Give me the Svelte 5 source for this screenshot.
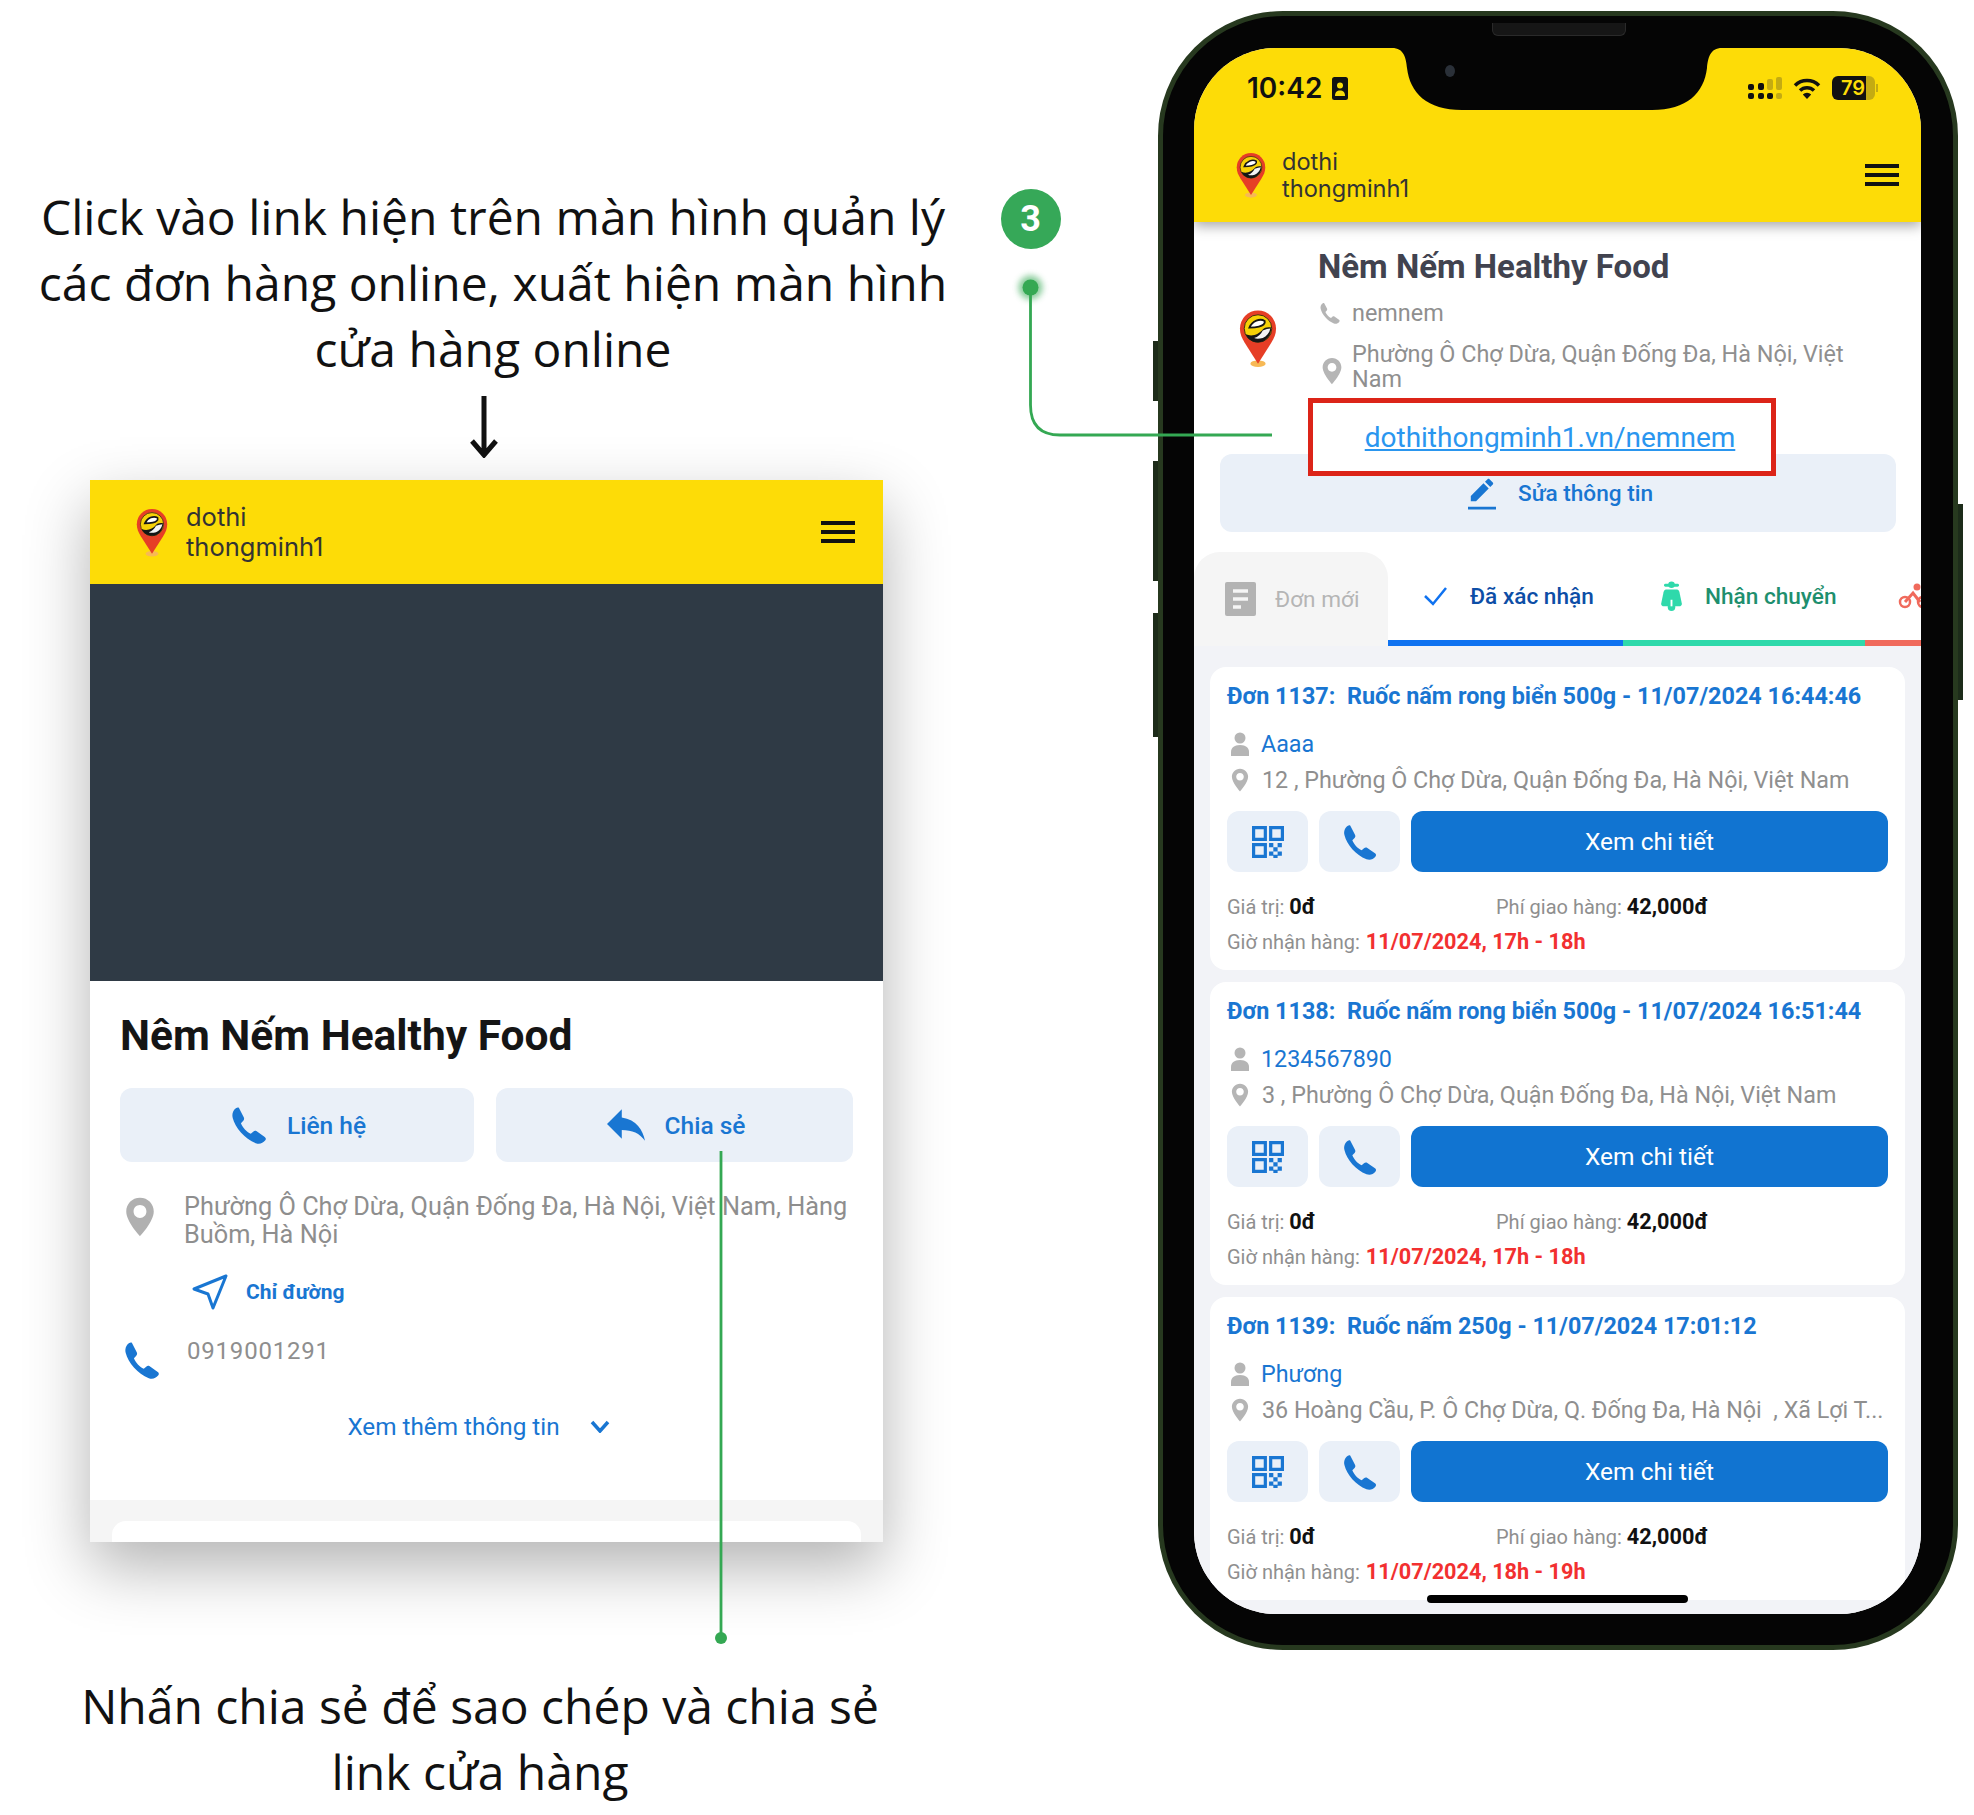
<script>
    const orders = [
        { id: 1137, item: "Ruốc nấm rong biển 500g", at: "11/07/2024 16:44:46", name: "Aaaa", addr: "12 , Phường Ô Chợ Dừa, Quận Đống Đa, Hà Nội, Việt Nam", slot: "11/07/2024, 17h - 18h" },
        { id: 1138, item: "Ruốc nấm rong biển 500g", at: "11/07/2024 16:51:44", name: "1234567890", addr: "3 , Phường Ô Chợ Dừa, Quận Đống Đa, Hà Nội, Việt Nam", slot: "11/07/2024, 17h - 18h" },
        { id: 1139, item: "Ruốc nấm 250g", at: "11/07/2024 17:01:12", name: "Phương", addr: "36 Hoàng Cầu, P. Ô Chợ Dừa, Q. Đống Đa, Hà Nội  , Xã Lợi T...", slot: "11/07/2024, 18h - 19h" }
    ];
    const phonePath = "M6.2 2.2 9 7.6c.4.8.2 1.5-.4 2.1L7.4 11c1 2.5 3.2 4.9 5.6 6l1.4-1.2c.6-.5 1.3-.6 2-.2l4.6 3.2c.8.6.8 1.4.2 2.1-1.3 1.6-3.2 2.2-5.3 1.5C9.5 20 4 13.4 2.7 8c-.6-2.4.2-4.4 1.8-5.6.7-.5 1.4-.6 1.7-.2z";
    const pinPath = "M12 1.5C7.6 1.5 4.5 5 4.5 9c0 5.500 7.500 13.500 7.500 13.500S19.500 14.500 19.500 9c0-4-3.100-7.500-7.500-7.500zm0 11c-2 0-3.500-1.500-3.500-3.500S10 5.500 12 5.500s3.500 1.500 3.500 3.500-1.500 3.500-3.500 3.500z";
</script>

{#snippet logo(cls)}
    <svg class={cls} viewBox="0 0 40 62">
        <ellipse cx="20" cy="57" rx="8" ry="3.500" fill="#f7b955" />
        <path d="M20 1a19 19 0 0 1 19 19c0 6-2 10-5 15L20 57 6 35C3 30 1 26 1 20A19 19 0 0 1 20 1z" fill="#e63e26" />
        <circle cx="20" cy="20" r="14.500" fill="#f6d106" stroke="#3a2a10" stroke-width="1" />
        <path d="M7 26c7 3 14 0 18-5 2-2 5-3 9-2 0 9-6 15.500-14 15.500-6 0-11-3.500-13-8.500z" fill="#161616" />
        <path d="M25 22c3-1 6-2 8-2-1 5-4 8-8 10-4 1-7 1-9 0 4-1 7-4 9-8z" fill="#f4f4f4" />
        <path d="M11 19c3-7 11-10 16-7 1 3-2 5-6 6-4 1-7 1-10 1z" fill="#fff" stroke="#161616" stroke-width="2" />
    </svg>
{/snippet}

{#snippet phoneIcon(cls)}
    <svg class={cls} viewBox="0 0 24 24"><path d={phonePath} /></svg>
{/snippet}

{#snippet pinIcon(cls)}
    <svg class={cls} viewBox="0 0 24 24"><path d={pinPath} fill-rule="evenodd" /></svg>
{/snippet}

{#snippet burger()}
    <div class="burger"><span></span><span></span><span></span></div>
{/snippet}

<div class="page">
    <div class="left">
        <p class="caption top">Click vào link hiện trên màn hình quản lý<br />các đơn hàng online, xuất hiện màn hình<br />cửa hàng online</p>
        <svg class="down" viewBox="0 0 36 62">
            <path d="M18 0V58M6 45 18 59 30 45" />
        </svg>

        <div class="mock">
            <header class="mock-head">
                {@render logo("mock-logo")}
                <div class="brand">dothi<br />thongminh1</div>
                {@render burger()}
            </header>
            <div class="hero"></div>
            <div class="mock-body">
                <h1>Nêm Nếm Healthy Food</h1>
                <div class="pair">
                    <div class="pair-btn">
                        {@render phoneIcon("ic-btn")}
                        <span>Liên hệ</span>
                    </div>
                    <div class="pair-btn share">
                        <svg class="ic-share" viewBox="3 5 18 15"><path d="M10 9V5l-7 7 7 7v-4.100c5 0 8.500 1.600 11 5.100-1-5-4-10-11-11z" /></svg>
                        <span>Chia sẻ</span>
                    </div>
                </div>
                <div class="info addr">
                    {@render pinIcon("ic-pin")}
                    <p>Phường Ô Chợ Dừa, Quận Đống Đa, Hà Nội, Việt Nam, Hàng Buồm, Hà Nội</p>
                </div>
                <div class="route">
                    <svg class="ic-send" viewBox="0 0 36 36"><path d="M34 2 2 15l14 5 5 14z" /></svg>
                    <span>Chỉ đường</span>
                </div>
                <div class="info tel">
                    {@render phoneIcon("ic-tel")}
                    <p>0919001291</p>
                </div>
                <div class="more">
                    <span>Xem thêm thông tin</span>
                    <svg class="ic-chev" viewBox="0 0 20 13"><path d="M2 2l8 9 8-9" /></svg>
                </div>
            </div>
            <div class="mock-foot"><div class="foot-card"></div></div>
        </div>

        <p class="caption bottom">Nhấn chia sẻ để sao chép và chia sẻ<br />link cửa hàng</p>
    </div>

    <div class="phone">
        <div class="speaker"></div>
        <div class="screen">
            <svg class="notch" viewBox="0 0 330 62"><path d="M0 0C12 0 14 10 15 20 18 45 35 62 70 62H260C295 62 312 45 315 20 316 10 318 0 330 0Z" /></svg>
            <span class="cam"></span>

            <header class="app-head">
                <div class="status">
                    <div class="clock">
                        <span>10:42</span>
                        <svg class="ic-id" viewBox="0 0 16 23"><rect width="16" height="23" rx="2.500" fill="#111" /><circle cx="8" cy="8.500" r="3" fill="#f9dc0a" /><path d="M3 19c0-4 2-5.500 5-5.500s5 1.500 5 5.500z" fill="#f9dc0a" /></svg>
                    </div>
                    <div class="tray">
                        <svg class="ic-signal" viewBox="0 0 34 23">
                            <g fill="#111">
                                <rect x="0" y="7" width="6" height="6" rx="2" /><rect x="10" y="6" width="6" height="7" rx="2" />
                                <rect x="0" y="16" width="6" height="6" rx="2" /><rect x="10" y="16" width="6" height="6" rx="2" /><rect x="19" y="16" width="6" height="6" rx="2" />
                            </g>
                            <g fill="#c4ab12"><rect x="19" y="2" width="6" height="11" rx="2" /><rect x="28" y="0" width="6" height="13" rx="2" /><rect x="28" y="16" width="6" height="6" rx="2" /></g>
                        </svg>
                        <svg class="ic-wifi" viewBox="0 0 28 22">
                            <path d="M2 8.500a17 17 0 0 1 24 0M7 13.500a10 10 0 0 1 14 0" fill="none" stroke="#111" stroke-width="3.500" />
                            <path d="M14 22 9.800 17.500a6 6 0 0 1 8.400 0z" fill="#111" />
                        </svg>
                        <div class="battery"><b>79</b><i></i></div>
                    </div>
                </div>
                <div class="app-bar">
                    {@render logo("app-logo")}
                    <div class="app-brand">dothi<br />thongminh1</div>
                    {@render burger()}
                </div>
            </header>

            <section class="store">
                {@render logo("store-logo")}
                <div class="store-info">
                    <h2>Nêm Nếm Healthy Food</h2>
                    <div class="store-row user">
                        {@render phoneIcon("ic-small")}
                        <span>nemnem</span>
                    </div>
                    <div class="store-row place">
                        {@render pinIcon("ic-small2")}
                        <span>Phường Ô Chợ Dừa, Quận Đống Đa, Hà Nội, Việt Nam</span>
                    </div>
                </div>
            </section>

            <div class="linkbox"><span>dothithongminh1.vn/nemnem</span></div>
            <div class="edit">
                <svg class="ic-edit" viewBox="2 1 20 23"><path d="M22 24H2v-2h20zM13.060 5.190l3.750 3.750L7.750 18H4v-3.750zm4.820 2.680-3.750-3.750 1.830-1.830c.39-.39 1.020-.39 1.410 0l2.340 2.340c.39.39.39 1.020 0 1.410z" /></svg>
                <span>Sửa thông tin</span>
            </div>

            <nav class="tabs">
                <div class="tab new">
                    <svg class="ic-doc" viewBox="0 0 31 34"><rect width="31" height="34" rx="2" fill="#b3b3b3" /><path d="M8 9h15M8 17h15M8 25h8" stroke="#f5f5f5" stroke-width="3.500" /></svg>
                    <span>Đơn mới</span>
                </div>
                <div class="tab done">
                    <svg class="ic-check" viewBox="0 0 25 20"><path d="M2 10l8 8L23 2" /></svg>
                    <span>Đã xác nhận</span>
                </div>
                <div class="tab ship">
                    <svg class="ic-moped" viewBox="0 0 24 32">
                        <circle cx="12" cy="4" r="3.500" fill="#2fd9ab" />
                        <rect x="4" y="3" width="16" height="3" rx="1.500" fill="#2fd9ab" />
                        <path d="M6 9h12c1 0 2 1 2.500 3L23 24c.3 2-1 3-3 3H4c-2 0-3.300-1-3-3l2.500-12C4 10 5 9 6 9z" fill="#2fd9ab" />
                        <rect x="8" y="20" width="8" height="12" rx="4" fill="#2fd9ab" />
                        <rect x="11" y="20" width="2" height="7" fill="#fff" />
                    </svg>
                    <span>Nhận chuyển</span>
                </div>
                <div class="tab ride">
                    <svg class="ic-bike" viewBox="0 0 32 26"><circle cx="7" cy="19" r="5" fill="none" stroke="#f06a5c" stroke-width="2.500" /><circle cx="25" cy="19" r="5" fill="none" stroke="#f06a5c" stroke-width="2.500" /><circle cx="19" cy="4" r="3.500" fill="#f06a5c" /><path d="M7 19l8-9 7 9" fill="none" stroke="#f06a5c" stroke-width="3" /></svg>
                </div>
            </nav>

            <div class="list">
                {#each orders as o}
                    <article class="card">
                        <div class="c-title">Đơn {o.id}:  {o.item} - {o.at}</div>
                        <div class="c-name">
                            <svg class="ic-user" viewBox="0 0 20 24"><circle cx="10" cy="6" r="5.500" fill="#b5b5b5" /><path d="M1 24v-4c0-4 3-7 9-7s9 3 9 7v4z" fill="#b5b5b5" /></svg>
                            <span>{o.name}</span>
                        </div>
                        <div class="c-addr">
                            {@render pinIcon("ic-addr")}
                            <span>{o.addr}</span>
                        </div>
                        <div class="c-actions">
                            <div class="square">
                                <svg class="ic-qr" viewBox="0 0 30 30">
                                    <path d="M1.500 1.500h11v11h-11zM17.500 1.500h11v11h-11zM1.500 17.500h11v11h-11z" fill="none" stroke="#1976d2" stroke-width="3" />
                                    <path d="M16 16h4v4h-4zM24 16h4v4h-4zM20 20h4v4h-4zM16 24h4v4h-4zM24 24h4v4h-4zM20 27h4v3h-4z" fill="#1976d2" />
                                </svg>
                            </div>
                            <div class="square">{@render phoneIcon("ic-call")}</div>
                            <div class="detail">Xem chi tiết</div>
                        </div>
                        <div class="c-meta">
                            <span class="m-left">Giá trị: <b>0đ</b></span>
                            <span>Phí giao hàng: <b>42,000đ</b></span>
                        </div>
                        <div class="c-slot">Giờ nhận hàng: <b>{o.slot}</b></div>
                    </article>
                {/each}
            </div>
            <span class="home"></span>
        </div>
        <span class="side s1"></span>
        <span class="side s2"></span>
        <span class="side s3"></span>
        <span class="side s4"></span>
    </div>

    <!-- callouts drawn over both columns -->
    <svg class="callouts" viewBox="0 0 1974 1815">
        <path d="M1030.500 287V405Q1030.500 435 1060 435H1272" />
        <path d="M721 1151V1638" />
        <circle class="glow" cx="1030.500" cy="287.500" r="12" />
        <circle cx="1030.500" cy="287.500" r="8" />
        <circle cx="721" cy="1638" r="6" />
    </svg>
    <div class="step">3</div>
</div>

<style>
    :global(body) {
        margin: 0;
        background: #fff;
    }

    .page {
        position: relative;
        width: 1974px;
        height: 1815px;
        display: flex;
        overflow: hidden;
        font-family: Roboto, "Liberation Sans", sans-serif;
    }

    .left {
        width: 986px;
        flex: none;
        display: flex;
        flex-direction: column;
    }

    .caption {
        margin: 0;
        font-family: "Open Sans", sans-serif;
        font-size: 48px;
        line-height: 66px;
        color: #111;
        text-align: center;
        white-space: nowrap;
    }
    .caption.top {
        padding-top: 184px;
    }
    .caption.bottom {
        margin-top: 131px;
        margin-right: 26px;
    }

    .down {
        display: block;
        width: 36px;
        height: 62px;
        margin: 14px 0 0 466px;
    }
    .down path {
        fill: none;
        stroke: #111;
        stroke-width: 5;
    }

    /* left mockup */
    .mock {
        width: 793px;
        height: 1062px;
        margin: 22px 0 0 90px;
        background: #fff;
        box-shadow: 0 25px 60px rgba(0, 0, 0, 0.3);
        display: flex;
        flex-direction: column;
    }
    .mock-head {
        height: 104px;
        background: #fddc07;
        display: flex;
        align-items: center;
        padding: 0 28px 0 46px;
        color: #333;
    }
    .mock-head :global(.mock-logo) {
        width: 32px;
        height: 50px;
        margin-top: 2px;
    }
    .brand {
        flex: 1;
        margin-left: 18px;
        font-family: Inter, sans-serif;
        font-size: 25.500px;
        line-height: 30px;
    }
    .burger {
        width: 34px;
        display: flex;
        flex-direction: column;
        gap: 5px;
    }
    .burger span {
        height: 4px;
        background: #111;
    }
    .hero {
        height: 397px;
        background: #2f3a45;
    }
    .mock-body {
        flex: 1;
        padding: 0 30px;
    }
    h1 {
        margin: 29px 0 0;
        font-size: 42.500px;
        line-height: 52px;
        font-weight: 700;
        color: #151515;
    }
    .pair {
        display: flex;
        gap: 22px;
        margin-top: 26px;
    }
    .pair-btn {
        flex: 1;
        height: 74px;
        border-radius: 12px;
        background: #eaf0f8;
        display: flex;
        align-items: center;
        justify-content: center;
        gap: 17px;
        font-size: 24.500px;
        font-weight: 500;
        color: #1976d2;
    }
    .pair-btn.share {
        gap: 20px;
        padding-left: 3px;
    }
    .pair-btn :global(.ic-btn) {
        width: 42px;
        height: 42px;
        fill: #1976d2;
    }
    .ic-share {
        width: 38px;
        height: 32px;
        fill: #1976d2;
    }
    .info {
        display: flex;
        color: #8e8e8e;
        font-size: 25.300px;
    }
    .info p {
        margin: 0;
        line-height: 28px;
    }
    .addr {
        margin-top: 31px;
        padding-left: 2px;
    }
    .addr :global(.ic-pin) {
        width: 44px;
        height: 44px;
        flex: none;
        fill: #b0b0b0;
        margin: 2px 22px 0 -4px;
    }
    .route {
        display: flex;
        align-items: center;
        gap: 18px;
        margin: 25px 0 0 72px;
        font-size: 21px;
        font-weight: 700;
        color: #1976d2;
    }
    .ic-send {
        width: 36px;
        height: 36px;
        fill: none;
        stroke: #1976d2;
        stroke-width: 3;
        stroke-linejoin: round;
    }
    .tel {
        margin-top: 27px;
        font-size: 24px;
        letter-spacing: 0.800px;
    }
    .tel :global(.ic-tel) {
        width: 42px;
        height: 42px;
        flex: none;
        fill: #1976d2;
        margin: 2px 0 0 1px;
    }
    .tel p {
        margin-left: 24px;
    }
    .more {
        display: flex;
        justify-content: center;
        align-items: center;
        gap: 30px;
        margin: 31px 16px 0 0;
        font-size: 24.300px;
        color: #1976d2;
    }
    .ic-chev {
        width: 20px;
        height: 13px;
        fill: none;
        stroke: #1976d2;
        stroke-width: 3.500;
    }
    .mock-foot {
        height: 42px;
        background: #f5f5f5;
        padding: 21px 22px 0;
        box-sizing: border-box;
    }
    .foot-card {
        height: 21px;
        background: #fff;
        border-radius: 14px 14px 0 0;
    }

    /* phone */
    .phone {
        position: relative;
        width: 800px;
        height: 1639px;
        box-sizing: border-box;
        margin: 11px 0 0 172px;
        padding: 32px 32px 31px 31px;
        background: #050505;
        border: 5px solid #27391f;
        border-radius: 125px;
    }
    .speaker {
        position: absolute;
        top: 7px;
        left: 329px;
        width: 132px;
        height: 12px;
        border-radius: 0 0 6px 6px;
        background: #161616;
        border: 1px solid #2a2a2a;
        border-top: 0;
    }
    .side {
        position: absolute;
        width: 5px;
        background: #1d2c1a;
    }
    .s1 { left: -10px; top: 325px; height: 60px; }
    .s2 { left: -10px; top: 445px; height: 120px; }
    .s3 { left: -10px; top: 597px; height: 124px; }
    .s4 { right: -10px; top: 488px; height: 196px; }

    .screen {
        position: relative;
        height: 100%;
        border-radius: 82px;
        overflow: hidden;
        background: #fff;
        display: flex;
        flex-direction: column;
        color: #8f8f8f;
    }
    .notch {
        position: absolute;
        top: 0;
        left: 198px;
        width: 330px;
        height: 62px;
        fill: #050505;
        z-index: 2;
    }
    .cam {
        position: absolute;
        z-index: 3;
        top: 17px;
        left: 251px;
        width: 10px;
        height: 12px;
        border-radius: 50%;
        background: #2a3038;
    }
    .app-head {
        height: 174px;
        flex: none;
        background: #fddc07;
        box-shadow: 0 4px 12px rgba(0, 0, 0, 0.35);
        position: relative;
        z-index: 1;
        color: #333;
    }
    .status {
        display: flex;
        justify-content: space-between;
        align-items: center;
        height: 48px;
        padding: 16px 46px 0 53px;
    }
    .clock {
        display: flex;
        align-items: center;
        gap: 10px;
        font-family: Inter, sans-serif;
        font-size: 28px;
        font-weight: 600;
        color: #111;
    }
    .ic-id {
        width: 16px;
        height: 23px;
    }
    .tray {
        display: flex;
        align-items: center;
        gap: 11px;
    }
    .ic-signal {
        width: 34px;
        height: 23px;
    }
    .ic-wifi {
        width: 28px;
        height: 22px;
    }
    .battery {
        position: relative;
        width: 43px;
        height: 24px;
        border-radius: 6px;
        background: linear-gradient(90deg, #111 80%, #c4ab12 80%);
        line-height: 24px;
        font-family: Inter, sans-serif;
        font-size: 20px;
        color: #fddc07;
    }
    .battery b {
        font-weight: 600;
        margin-left: 9px;
    }
    .battery i {
        position: absolute;
        right: -3px;
        top: 8px;
        width: 2px;
        height: 8px;
        background: #c4ab12;
    }
    .app-bar {
        display: flex;
        align-items: center;
        height: 70px;
        margin-top: 28px;
        padding: 0 22px 0 42px;
    }
    .app-bar :global(.app-logo) {
        width: 30px;
        height: 47px;
    }
    .app-brand {
        flex: 1;
        margin-left: 16px;
        font-family: Inter, sans-serif;
        font-size: 23.600px;
        line-height: 27px;
    }
    .store {
        display: flex;
        padding: 25px 40px 0 45px;
    }
    .store :global(.store-logo) {
        width: 38px;
        height: 60px;
        flex: none;
        margin: 62px 41px 0 0;
    }
    .store-info {
        flex: 1;
    }
    h2 {
        margin: 0;
        font-size: 33px;
        line-height: 40px;
        font-weight: 700;
        color: #41434f;
    }
    .store-row {
        display: flex;
        font-size: 23.400px;
        line-height: 25px;
    }
    .store-row :global(.ic-small) {
        width: 24px;
        height: 24px;
        flex: none;
        fill: #b5b5b5;
        margin-right: 10px;
    }
    .store-row :global(.ic-small2) {
        width: 30px;
        height: 34px;
        flex: none;
        fill: #b5b5b5;
        margin: 12px 5px 0 -1px;
    }
    .user {
        margin-top: 14px;
    }
    .place {
        margin-top: 16px;
    }
    .linkbox {
        position: relative;
        z-index: 1;
        box-sizing: border-box;
        width: 468px;
        height: 78px;
        margin: 6px 0 0 114px;
        padding-left: 16px;
        border: 5px solid #dc2418;
        background: #fff;
        display: flex;
        align-items: center;
        justify-content: center;
        font-size: 28px;
        color: #2a96ef;
        text-decoration: underline;
        flex: none;
    }
    .edit {
        flex: none;
        height: 78px;
        margin: -22px 25px 0 26px;
        padding-left: 5px;
        border-radius: 12px;
        background: #eaf0f8;
        display: flex;
        align-items: center;
        justify-content: center;
        gap: 22px;
        font-size: 22.600px;
        font-weight: 500;
        color: #1976d2;
    }
    .ic-edit {
        width: 28px;
        height: 33px;
        fill: #1976d2;
    }
    .tabs {
        flex: none;
        display: flex;
        height: 94px;
        margin-top: 20px;
        font-size: 22.600px;
        font-weight: 500;
    }
    .tab {
        box-sizing: border-box;
        display: flex;
        align-items: center;
        border-bottom: 6px solid transparent;
    }
    .new {
        width: 194px;
        padding-left: 31px;
        gap: 19px;
        background: #f5f5f5;
        border-radius: 26px 26px 0 0;
        border-bottom: 0;
        color: #b5b5b5;
        font-weight: 400;
    }
    .done {
        width: 235px;
        padding-left: 35px;
        gap: 22px;
        border-color: #0f72f0;
        color: #0d4ea6;
    }
    .ship {
        width: 242px;
        padding-left: 37px;
        gap: 22px;
        border-color: #2fd9ab;
        color: #1e8f6e;
    }
    .ride {
        flex: 1;
        padding-left: 33px;
        border-color: #f06a5c;
        overflow: hidden;
    }
    .ic-doc {
        width: 31px;
        height: 34px;
    }
    .ic-check {
        width: 25px;
        height: 20px;
        fill: none;
        stroke: #0f72f0;
        stroke-width: 2.500;
    }
    .ic-moped {
        width: 23px;
        height: 30px;
    }
    .ic-bike {
        width: 32px;
        height: 26px;
        flex: none;
    }
    .list {
        flex: 1;
        min-height: 0;
        background: #f2f3f7;
        padding: 21px 16px 0;
        display: flex;
        flex-direction: column;
        gap: 12px;
    }
    .card {
        flex: none;
        box-sizing: border-box;
        height: 303px;
        padding: 14px 17px 0;
        background: #fff;
        border-radius: 16px;
        font-size: 23.300px;
    }
    .c-title {
        line-height: 30px;
        font-weight: 700;
        color: #1976d2;
        white-space: pre;
        font-size: 23.400px;
    }
    .c-name,
    .c-addr {
        display: flex;
        align-items: center;
        gap: 11px;
        line-height: 30px;
        padding-left: 3px;
    }
    .c-name {
        margin-top: 18px;
        color: #1976d2;
    }
    .c-addr {
        margin-top: 6px;
    }
    .c-addr span {
        white-space: pre;
    }
    .ic-user {
        width: 20px;
        height: 24px;
    }
    .c-addr :global(.ic-addr) {
        width: 26px;
        height: 28px;
        flex: none;
        fill: #b5b5b5;
        margin: 0 -2px 0 -3px;
    }
    .c-actions {
        display: flex;
        gap: 11px;
        margin-top: 16px;
        height: 61px;
    }
    .square {
        width: 81px;
        border-radius: 12px;
        background: #eaf0f8;
        display: flex;
        align-items: center;
        justify-content: center;
    }
    .ic-qr {
        width: 32px;
        height: 32px;
    }
    .square :global(.ic-call) {
        width: 40px;
        height: 40px;
        fill: #1976d2;
    }
    .detail {
        flex: 1;
        border-radius: 12px;
        background: #1174d1;
        color: #fff;
        display: flex;
        align-items: center;
        justify-content: center;
        font-size: 24.500px;
    }
    .c-meta {
        display: flex;
        margin-top: 22px;
        line-height: 26px;
        font-size: 20px;
    }
    .m-left {
        width: 269px;
    }
    .c-meta b {
        color: #111;
        font-size: 21.700px;
        font-weight: 700;
    }
    .c-slot {
        margin-top: 9px;
        line-height: 26px;
        font-size: 20px;
    }
    .c-slot b {
        margin-left: 1px;
        color: #f23030;
        font-size: 21.700px;
        font-weight: 700;
    }
    .home {
        position: absolute;
        left: 233px;
        bottom: 11px;
        width: 261px;
        height: 8px;
        border-radius: 4px;
        background: #000;
    }

    /* callouts */
    .callouts {
        position: absolute;
        left: 0;
        top: 0;
        width: 1974px;
        height: 1815px;
        pointer-events: none;
    }
    .callouts path {
        fill: none;
        stroke: #34a853;
        stroke-width: 2.800;
    }
    .callouts circle {
        fill: #34a853;
    }
    .callouts .glow {
        opacity: 0.6;
        filter: blur(3px);
    }
    .step {
        position: absolute;
        left: 1000.500px;
        top: 189px;
        width: 60px;
        height: 60px;
        border-radius: 50%;
        background: #36a858;
        color: #fff;
        font-family: Roboto, sans-serif;
        font-weight: 700;
        font-size: 36px;
        line-height: 60px;
        text-align: center;
    }
</style>
